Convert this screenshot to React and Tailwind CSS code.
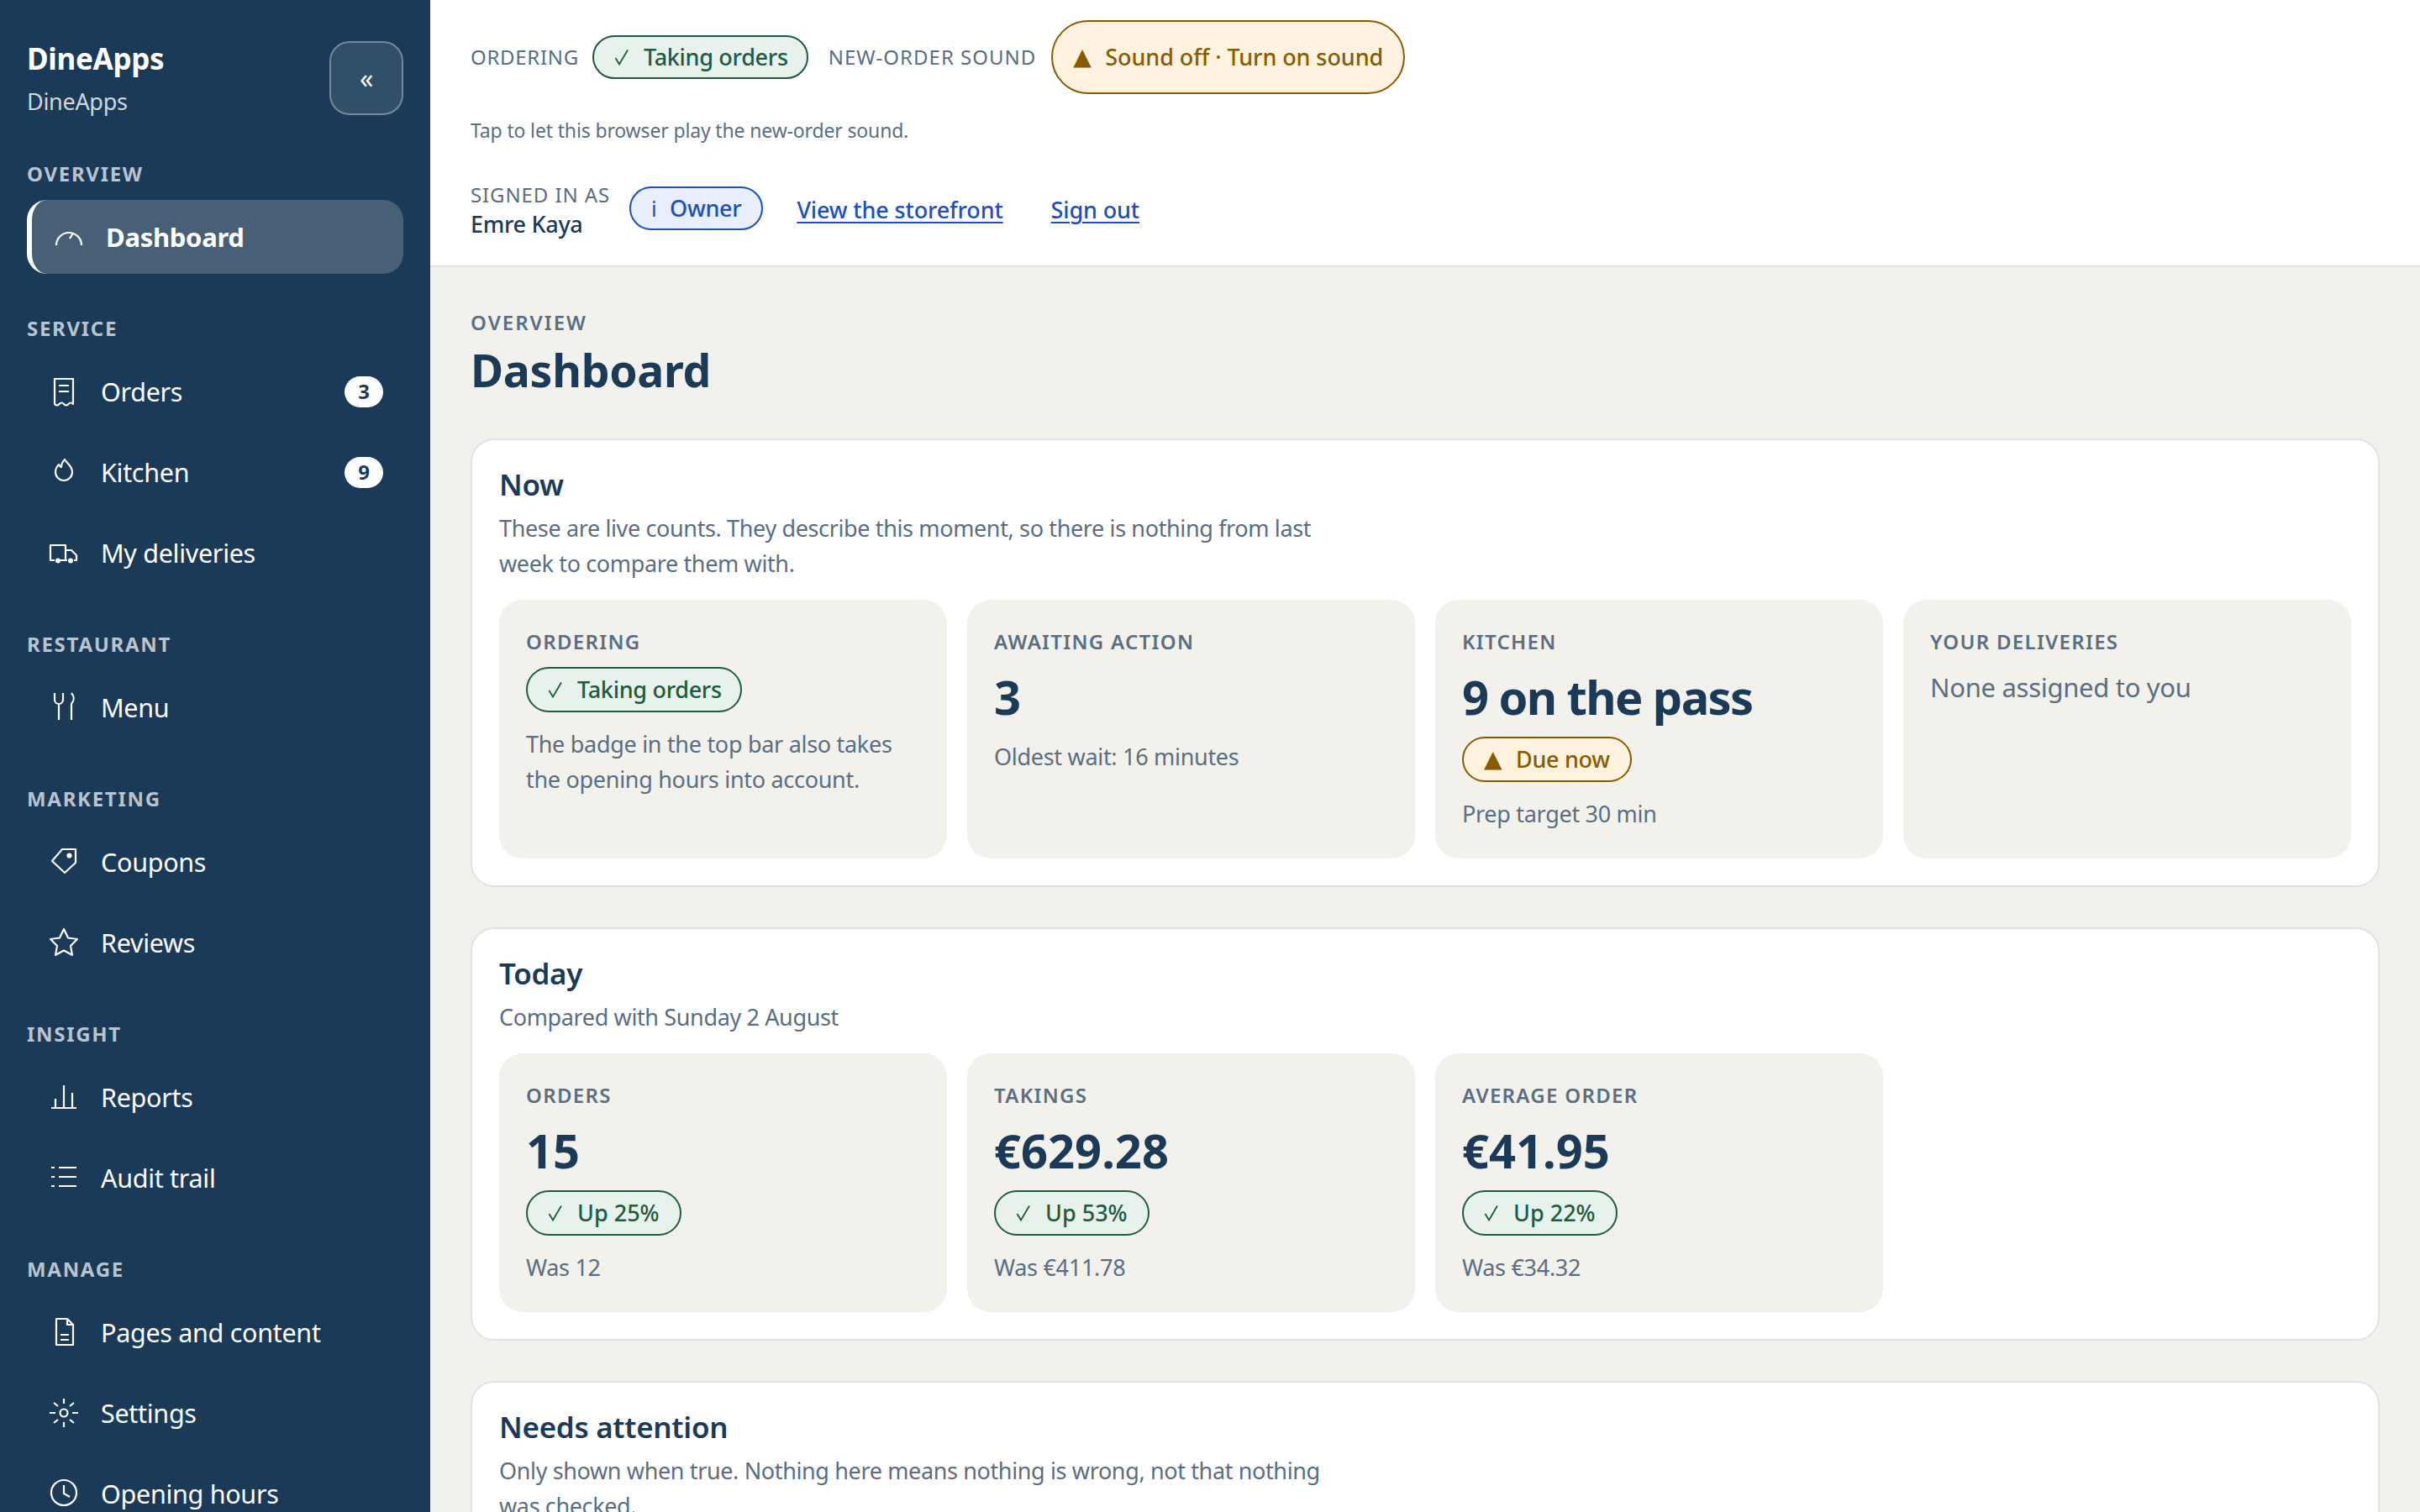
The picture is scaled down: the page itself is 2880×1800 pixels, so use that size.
const I = ({ children }) => (
  <svg viewBox="0 0 40 40" fill="none" stroke="currentColor" strokeWidth="2.200" strokeLinejoin="round" className="w-[40px] h-[40px] shrink-0">{children}</svg>
);

const icons = {
  gauge: <I><path d="M5 30A15 15 0 0 1 35 30" /><path d="M21 22l4-6.500" /></I>,
  receipt: <I><path d="M9 35V5h22v30q-2.750-3-5.500 0t-5.500 0t-5.500 0t-5.500 0z" /><path d="M14 13h12M14 20h12" /></I>,
  flame: <I><path d="M21 5C24 10 30 13 30 20A10 10 0 0 1 10 20C10 16 12 13 14 11C15 13 16 14 17 14C17 11 18 8 21 5Z" /></I>,
  truck: <I><path d="M9 29H4V11h18v18h-9" /><path d="M22 17h7l6 6v6h-3" /><path d="M22 29h2" /><circle cx="13" cy="29.500" r="3" fill="currentColor" stroke="none" /><circle cx="28" cy="29.500" r="3" fill="currentColor" stroke="none" /></I>,
  menu: <I><path d="M9 3v8a5 5 0 0 0 10 0V3" /><path d="M14 16v19" /><path d="M29 3c3.500 4 3.500 9 0 13v19" /></I>,
  tag: <I><path d="M18 5h16v16L21 33 6 19z" /><circle cx="26.500" cy="12.500" r="2" fill="currentColor" /></I>,
  star: <I><path d="M20 4l5 10.500 11 1.500-8 8 2 11-10-5.500L10 35l2-11-8-8 11-1.500z" /></I>,
  reports: <I><path d="M5 33h30M10 22v11M20 6v27M30 15v18" /></I>,
  audit: <I><path d="M14 8h21M14 19h21M14 30h21M5 8h4M5 19h4M5 30h4" /></I>,
  pages: <I><path d="M11 4h13l7 7v24H11z" /><path d="M24 4v7h7M16 23h10M16 29h10" /></I>,
  sun: <I><circle cx="20" cy="20" r="4.500" /><path d="M20 3v6M20 31v6M3 20h7M30 20h7M8 8l5 4M32 8l-5 4M8 32l5-4M32 32l-5-4" /></I>,
  clock: <I><circle cx="20" cy="19" r="15" /><path d="M20 10v10l7 4" /></I>,
};

const Item = ({ icon, label, badge }) => (
  <div className="flex items-center gap-6 h-[88px] pl-6 pr-6 text-[30.5px] text-white">
    {icons[icon]}
    <span className="flex-1 pt-[2px]">{label}</span>
    {badge && <span className="flex items-center justify-center w-[46px] h-[37px] rounded-full bg-white text-[#1b3a57] text-[24px] font-bold">{badge}</span>}
  </div>
);

const Group = ({ title, children }) => (
  <div className="mt-[46px]">
    <div className="h-[36px] leading-[38px] mb-[14px] text-[24px] font-bold tracking-[1.7px] text-[#bac4ce]">{title}</div>
    <div className="flex flex-col gap-2">{children}</div>
  </div>
);

const Mark = ({ tone }) => {
  if (tone === "green")
    return (
      <svg viewBox="0 0 20 20" fill="none" stroke="currentColor" strokeWidth="1.800" className="w-[20px] h-[20px] shrink-0">
        <path d="M1.500 11L6 18.500 16 1.500" />
      </svg>
    );
  if (tone === "amber") return <span className="w-[23px] text-[28px] leading-none font-['DejaVu_Sans'] font-normal">▲</span>;
  return <span className="w-[7px] text-[26px] font-normal">i</span>;
};

const Pill = ({ tone, h = "h-[54px]", pr = "pr-6", children }) => {
  const cls = {
    green: "border-[#1e5b3f] bg-[#e8f2ec] text-[#1e5b3f]",
    amber: "border-[#8a5a00] bg-[#fff3e0] text-[#8a5a00]",
    blue: "border-[#1d4fbf] bg-[#e8eefb] text-[#1d4fbf]",
  }[tone];
  return (
    <span className={`inline-flex items-center gap-[15px] ${h} pl-6 ${pr} rounded-full border-2 text-[27px] font-medium whitespace-nowrap ${cls}`}>
      <Mark tone={tone} />
      {children}
    </span>
  );
};

const Tile = ({ label, children }) => (
  <div className="bg-[#f2f1ec] rounded-[28px] p-8 min-h-[308px]">
    <div className="h-[36px] leading-[35px] text-[24px] font-semibold tracking-[1.3px] text-[#5a6e81]">{label}</div>
    {children}
  </div>
);

const Value = ({ tight, children }) => (
  <div className={`mt-3 h-[70px] leading-[70px] text-[56px] font-bold text-[#1b3a57] ${tight ? "tracking-[-1.600px]" : "tracking-normal"}`}>{children}</div>
);
const Sub = ({ children, mt = "mt-[17px]" }) => <div className={`${mt} text-[27px] leading-[42px] text-[#5a6e81]`}>{children}</div>;

const Card = ({ title, sub, children }) => (
  <section className="bg-white border-2 border-[#dde3e8] rounded-[28px] p-8 mb-[48px]">
    <h2 className="h-[44px] leading-[42px] text-[35px] font-semibold text-[#1b3a57]">{title}</h2>
    <p className="mt-2 max-w-[1010px] text-[27px] leading-[42px] tracking-[-0.370px] text-[#5a6e81]">{sub}</p>
    {children && <div className="mt-[22px] grid grid-cols-4 gap-6">{children}</div>}
  </section>
);

const Compare = ({ label, value, up, was }) => (
  <Tile label={label}>
    <Value>{value}</Value>
    <div className="mt-[13px]"><Pill tone="green"><span className="tracking-normal">{up}</span></Pill></div>
    <Sub>{was}</Sub>
  </Tile>
);

export default function App() {
  return (
    <div className="flex h-screen overflow-hidden font-['Noto_Sans',sans-serif] tracking-[-0.3px]">
      <aside className="w-[512px] shrink-0 bg-[#1b3a57] px-8 overflow-hidden">
        <div className="flex items-center justify-between pt-[43px]">
          <div>
            <div className="h-[54px] leading-[54px] text-[35px] font-bold text-white">DineApps</div>
            <div className="mt-[3px] h-[42px] leading-[42px] text-[27px] text-[#d0d7dd]">DineApps</div>
          </div>
          <button className="flex items-center justify-center w-[88px] h-[88px] rounded-[24px] border-2 border-[#76899a] bg-[#314f69] text-white text-[32px]">«</button>
        </div>
        <div className="mt-[46px]">
          <div className="h-[36px] leading-[38px] mb-[14px] text-[24px] font-bold tracking-[1.7px] text-[#bac4ce]">OVERVIEW</div>
          <div className="flex items-center gap-6 h-[88px] pl-6 rounded-[24px] border-l-[6px] border-white bg-[#486075] text-[31px] font-bold text-white">
            {icons.gauge}
            <span>Dashboard</span>
          </div>
        </div>
        <Group title="SERVICE">
          <Item icon="receipt" label="Orders" badge="3" />
          <Item icon="flame" label="Kitchen" badge="9" />
          <Item icon="truck" label="My deliveries" />
        </Group>
        <Group title="RESTAURANT">
          <Item icon="menu" label="Menu" />
        </Group>
        <Group title="MARKETING">
          <Item icon="tag" label="Coupons" />
          <Item icon="star" label="Reviews" />
        </Group>
        <Group title="INSIGHT">
          <Item icon="reports" label="Reports" />
          <Item icon="audit" label="Audit trail" />
        </Group>
        <Group title="MANAGE">
          <Item icon="pages" label="Pages and content" />
          <Item icon="sun" label="Settings" />
          <Item icon="clock" label="Opening hours" />
        </Group>
      </aside>

      <div className="flex-1 min-w-0 bg-[#f2f1ec] overflow-hidden">
        <header className="bg-white border-b-2 border-[#dde3e8] h-[318px] px-12 pt-6">
          <div className="flex items-center h-[88px]">
            <span className="text-[24px] tracking-[0.700px] text-[#5a6e81]">ORDERING</span>
            <span className="ml-4"><Pill tone="green" h="h-[52px]" pr="pr-[22px]">Taking orders</Pill></span>
            <span className="ml-6 text-[24px] tracking-[1px] text-[#5a6e81]">NEW-ORDER SOUND</span>
            <span className="ml-[18px]"><Pill tone="amber" h="h-[88px]"><span className="tracking-[-0.080px]">Sound off · Turn on sound</span></Pill></span>
          </div>
          <p className="mt-[25px] h-[36px] leading-[36px] text-[23px] tracking-[-0.150px] text-[#5a6e81]">Tap to let this browser play the new-order sound.</p>
          <div className="mt-[41px] flex items-center">
            <div>
              <div className="h-[35px] leading-[35px] text-[24px] tracking-[0.900px] text-[#5a6e81]">SIGNED IN AS</div>
              <div className="h-[35px] leading-[35px] text-[27px] font-medium text-[#1b3a57]">Emre Kaya</div>
            </div>
            <span className="ml-[23px] -mt-[2px]"><Pill tone="blue" h="h-[52px]">Owner</Pill></span>
            <a className="ml-[40px] mt-[2px] text-[27px] font-medium tracking-[-0.150px] text-[#1d4fbf] underline underline-offset-4 decoration-2">View the storefront</a>
            <a className="ml-[57px] mt-[2px] text-[27px] font-medium tracking-[-0.150px] text-[#1d4fbf] underline underline-offset-4 decoration-2">Sign out</a>
          </div>
        </header>

        <main className="px-12 pt-12">
          <div className="h-[36px] leading-[36px] text-[24px] font-semibold tracking-[2px] text-[#5a6e81]">OVERVIEW</div>
          <h1 className="mt-[4px] h-[70px] leading-[70px] text-[53.500px] font-bold text-[#1b3a57]">Dashboard</h1>
          <div className="mt-[46px]">
            <Card title="Now" sub="These are live counts. They describe this moment, so there is nothing from last week to compare them with.">
              <Tile label="ORDERING">
                <div className="mt-3"><Pill tone="green" pr="pr-[22px]">Taking orders</Pill></div>
                <div className="mt-[17px] text-[27px] leading-[42px] text-[#5a6e81]">The badge in the top bar also takes the opening hours into account.</div>
              </Tile>
              <Tile label="AWAITING ACTION">
                <Value>3</Value>
                <Sub mt="mt-[16px]">Oldest wait: 16 minutes</Sub>
              </Tile>
              <Tile label="KITCHEN">
                <Value tight>9 on the pass</Value>
                <div className="mt-[13px]"><Pill tone="amber">Due now</Pill></div>
                <Sub>Prep target 30 min</Sub>
              </Tile>
              <Tile label="YOUR DELIVERIES">
                <div className="mt-[12px] text-[31px] leading-[48px] text-[#5a6e81]">None assigned to you</div>
              </Tile>
            </Card>
            <Card title="Today" sub="Compared with Sunday 2 August">
              <Compare label="ORDERS" value="15" up="Up 25%" was="Was 12" />
              <Compare label="TAKINGS" value="€629.28" up="Up 53%" was="Was €411.78" />
              <Compare label="AVERAGE ORDER" value="€41.95" up="Up 22%" was="Was €34.32" />
            </Card>
            <Card title="Needs attention" sub="Only shown when true. Nothing here means nothing is wrong, not that nothing was checked." />
          </div>
        </main>
      </div>
    </div>
  );
}
